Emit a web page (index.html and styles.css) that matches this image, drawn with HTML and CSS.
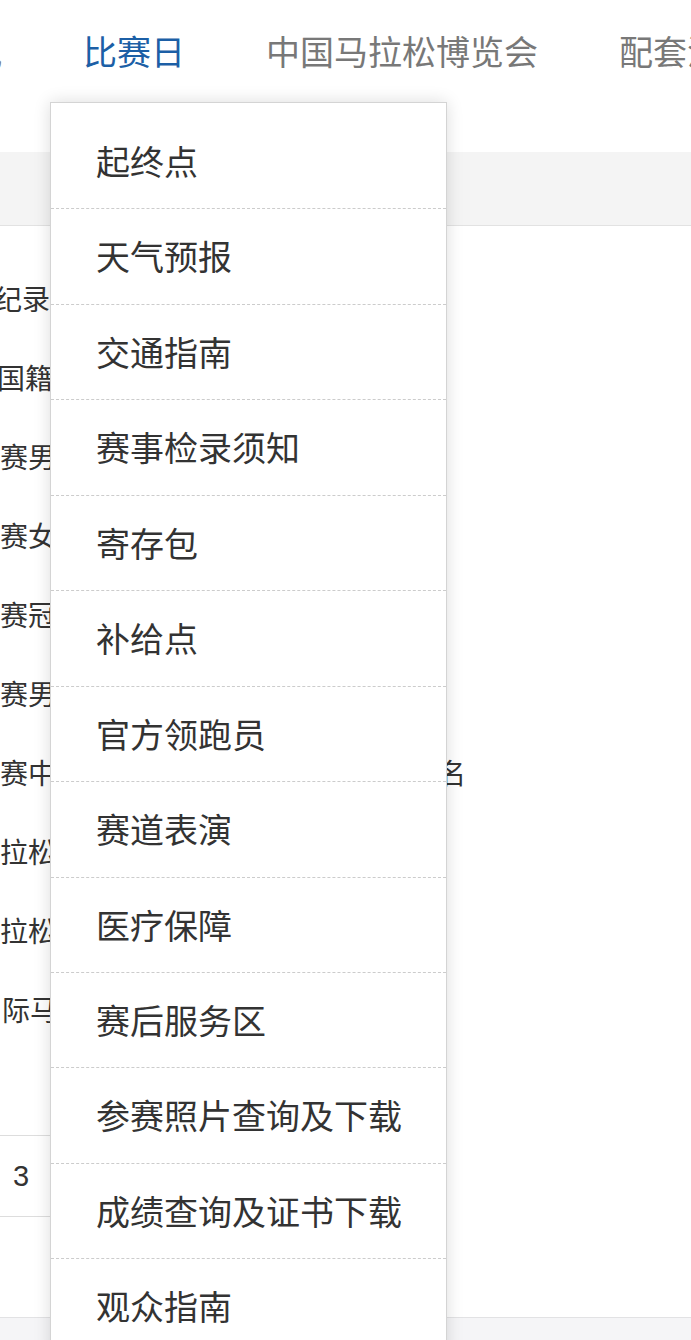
FILE: index.html
```html
<!DOCTYPE html>
<html lang="zh-CN">
<head>
<meta charset="utf-8">
<title>比赛日</title>
<link rel="stylesheet" href="styles.css">
</head>
<body>
<div class="page">
  <header class="header">
    <nav class="nav">
      <a class="nav-item">赛事资讯</a>
      <a class="nav-item nav-item--active">比赛日</a>
      <a class="nav-item">中国马拉松博览会</a>
      <a class="nav-item">配套活动</a>
    </nav>
  </header>

  <div class="band"></div>

  <section class="content">
    <div class="row row--shift6">纪录保持者</div>
    <div class="row row--shift3">国籍选手</div>
    <div class="row">赛男子组</div>
    <div class="row">赛女子组</div>
    <div class="row">赛冠军奖金</div>
    <div class="row">赛男子前八名</div>
    <div class="row row--split"><span>赛中国籍选手</span><span>前八名</span></div>
    <div class="row">拉松女子组</div>
    <div class="row">拉松男子组</div>
    <div class="row row--in3">际马拉松</div>
  </section>

  <div class="table">
    <div class="table-row">3</div>
  </div>

  <div class="footer-band"></div>

  <ul class="dropdown">
    <li class="dropdown-item">起终点</li>
    <li class="dropdown-item">天气预报</li>
    <li class="dropdown-item">交通指南</li>
    <li class="dropdown-item">赛事检录须知</li>
    <li class="dropdown-item">寄存包</li>
    <li class="dropdown-item">补给点</li>
    <li class="dropdown-item">官方领跑员</li>
    <li class="dropdown-item">赛道表演</li>
    <li class="dropdown-item">医疗保障</li>
    <li class="dropdown-item">赛后服务区</li>
    <li class="dropdown-item">参赛照片查询及下载</li>
    <li class="dropdown-item">成绩查询及证书下载</li>
    <li class="dropdown-item">观众指南</li>
  </ul>
</div>
</body>
</html>
```

FILE: styles.css
```css
* { box-sizing: border-box; }

html, body {
  margin: 0;
  padding: 0;
  background: #ffffff;
}

body {
  width: 691px;
  height: 1340px;
  overflow: hidden;
  font-family: "Noto Sans CJK SC", "Noto Sans", "Liberation Sans", sans-serif;
  color: #333333;
}

.page {
  position: relative;
  width: 691px;
  height: 1340px;
  overflow: hidden;
}

.header {
  height: 102px;
}

.nav {
  display: flex;
  gap: 81px;
  margin-left: -134px;
  white-space: nowrap;
}

.nav-item {
  font-size: 34px;
  line-height: 102px;
  color: #787878;
  text-decoration: none;
  flex: none;
}

.nav-item--active {
  color: #1c5fa6;
}

.band {
  margin-top: 50px;
  height: 74px;
  background: #f4f4f4;
  border-bottom: 1px solid #e2e2e2;
}

.content {
  padding-top: 33px;
}

.row {
  height: 79px;
  line-height: 79px;
  font-size: 28px;
  color: #333333;
  white-space: nowrap;
}

.row--shift6 { margin-left: -6px; }
.row--shift3 { margin-left: -3px; }
.row--in3 { padding-left: 2px; }

.row--split {
  display: flex;
  justify-content: space-between;
  width: 466px;
}

.table {
  margin-top: 86px;
  width: 320px;
  border-top: 1px solid #dddddd;
  border-bottom: 1px solid #dddddd;
}

.table-row {
  height: 80px;
  line-height: 80px;
  padding-left: 13px;
  font-family: "Liberation Sans", Arial, sans-serif;
  font-size: 29px;
  color: #333333;
}

.footer-band {
  margin-top: 100px;
  height: 40px;
  background: #f5f5f7;
  border-top: 1px solid #e2e2e4;
}

.dropdown {
  position: absolute;
  left: 50px;
  top: 102px;
  width: 397px;
  margin: 0;
  padding: 11px 0 0;
  list-style: none;
  background: #ffffff;
  border: 1px solid #d4d4d4;
  box-shadow: 0 0 16px rgba(0, 0, 0, 0.14);
}

.dropdown-item {
  height: 95.45px;
  line-height: 94px;
  padding-left: 45px;
  font-size: 34px;
  color: #333333;
  border-bottom: 1px dashed #cccccc;
  white-space: nowrap;
}
```
